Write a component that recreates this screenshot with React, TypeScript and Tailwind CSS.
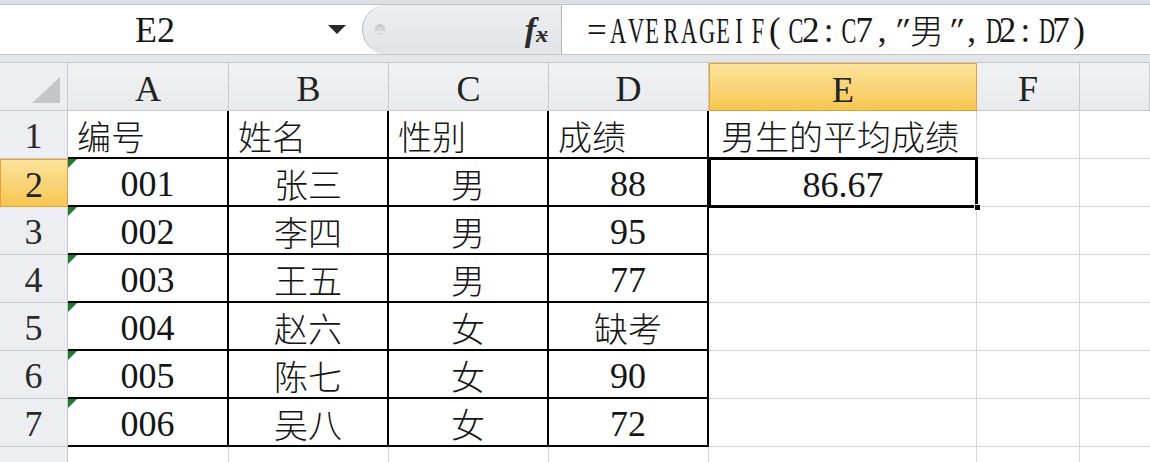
import React from "react";

const SERIF = "font-['Liberation_Serif','Noto_Sans_CJK_SC',serif]";
const CJK = "font-['Noto_Sans_CJK_SC',sans-serif] font-light";

const isCJK = (s: string) => /[\u4e00-\u9fff]/.test(s);

const formula = '=AVERAGEIF(C2:C7,"男",D2:D7)';

const data: string[][] = [
  ["编号", "姓名", "性别", "成绩"],
  ["001", "张三", "男", "88"],
  ["002", "李四", "男", "95"],
  ["003", "王五", "男", "77"],
  ["004", "赵六", "女", "缺考"],
  ["005", "陈七", "女", "90"],
  ["006", "吴八", "女", "72"],
];

function Txt({ s, left }: { s: string; left?: boolean }) {
  const font = isCJK(s) ? "text-[34px] leading-none " + CJK : "text-[36px] leading-none " + SERIF;
  return (
    <span className={font + " text-[#151515] " + (left ? "pl-[9px]" : "")}>{s}</span>
  );
}

function GreenTri() {
  return (
    <svg className="absolute left-0 top-0" width="9" height="9" viewBox="0 0 9 9">
      <polygon points="0,0 9,0 0,9" fill="#1f7a2e" />
    </svg>
  );
}

function FChar({ c }: { c: string }) {
  if (isCJK(c)) {
    return <span className={"inline-block w-[35.8px] text-center text-[34px] " + CJK}>{c}</span>;
  }
  const wide = /[A-Z]/.test(c);
  return (
    <span className={"inline-block w-[17.9px] text-center text-[35px] " + SERIF}>
      {wide ? (
        <span className="inline-block text-[36px] scale-x-[0.62]">{c}</span>
      ) : c === '"' ? (
        <span className="inline-block skew-x-[-20deg]">{c}</span>
      ) : (
        c
      )}
    </span>
  );
}

export default function App() {
  const colLetters = ["A", "B", "C", "D", "E", "F", ""];
  return (
    <div className="w-[1150px] h-[462px] overflow-hidden bg-white">
      {/* Formula bar */}
      <div className="h-[4px] bg-[#dcdfe3]" />
      <div className="flex h-[51px] border-y border-[#c2c5c9] bg-white">
        <div className="w-[362px] flex items-center">
          <div className={"w-[310px] text-center text-[36px] leading-none text-[#151515] " + SERIF}>E2</div>
          <div className="ml-[18px] w-0 h-0 border-x-[9px] border-t-[9px] border-x-transparent border-t-[#2a2a2a]" />
        </div>
        <div className="w-[200px] h-full rounded-l-[25px] border-l border-r border-[#b5b8bc] bg-gradient-to-b from-[#eceef1] to-[#e2e5e8] flex items-center justify-between pl-[10px] pr-[13px]">
          <svg width="14" height="14" viewBox="0 0 14 14" className="mb-[2px]">
            <path d="M2 9 C2 4 4.5 2 7 2 C9.5 2 12 4 12 9 Z" fill="#c9cbce" />
            <path d="M4 6 L10 6 M4 8 L10 8" stroke="#e6e7e9" strokeWidth="1" />
            <rect x="4" y="11" width="6" height="1.5" fill="#d6d8da" />
          </svg>
          <div className={"flex items-end text-[#2b2b2b] italic " + SERIF}>
            <span className="text-[34px] leading-none font-bold">f</span>
            <span className="text-[24px] leading-none font-bold mb-[1px] line-through decoration-1">x</span>
          </div>
        </div>
        <div className="flex-1 flex items-center pl-[25px] pt-[2px] text-[#151515]">
          <div className="flex leading-none">
            {formula.split("").map((c, i) => (
              <FChar key={i} c={c} />
            ))}
          </div>
        </div>
      </div>
      <div className="h-[8px] bg-[#e4e6e9] border-b border-[#c3c6ca]" />

      {/* Grid */}
      <div className="grid grid-cols-[68px_161px_160px_160px_160px_268px_103px_70px]">
        {/* header row */}
        <div className="h-[48px] border-r border-b border-[#c6c9cd] bg-[#eceef1] relative">
          <svg className="absolute left-[32px] top-[14px]" width="28" height="26" viewBox="0 0 28 26">
            <polygon points="28,0 28,26 0,26" fill="#c3c6ca" />
          </svg>
        </div>
        {colLetters.map((l, i) =>
          l === "E" ? (
            <div key={i} className="h-[48px] pt-[5px] border border-[#e3a13a] bg-gradient-to-b from-[#fbe39a] to-[#f7c64f] flex items-center justify-center">
              <span className={"text-[36px] leading-none text-[#222] " + SERIF}>{l}</span>
            </div>
          ) : (
            <div key={i} className="h-[48px] pt-[5px] border-r border-b border-[#c6c9cd] bg-gradient-to-b from-[#f1f2f4] to-[#e8eaed] flex items-center justify-center">
              <span className={"text-[36px] leading-none text-[#222] " + SERIF}>{l}</span>
            </div>
          )
        )}

        {/* body rows */}
        {[1, 2, 3, 4, 5, 6, 7, 8].map((r) => {
          const row = data[r - 1];
          return (
            <React.Fragment key={r}>
              {r === 2 ? (
                <div className="h-[48px] pt-[3px] border border-[#e3a13a] bg-gradient-to-b from-[#fbe39a] to-[#f7c64f] flex items-center justify-center">
                  <span className={"text-[36px] leading-none text-[#222] " + SERIF}>{r}</span>
                </div>
              ) : r === 8 ? (
                <div className="h-[48px] border-r border-b border-[#c6c9cd] bg-[#eceef1]" />
              ) : (
                <div className="h-[48px] pt-[3px] border-r border-b border-[#c6c9cd] bg-[#eceef1] flex items-center justify-center">
                  <span className={"text-[36px] leading-none text-[#2a2a2a] " + SERIF}>{r}</span>
                </div>
              )}
              {[0, 1, 2, 3].map((c) =>
                row ? (
                  <div
                    key={c}
                    className={
                      "relative h-[48px] pt-[3px] border-r-2 border-b-2 border-black bg-white flex items-center " +
                      (r === 1 ? "justify-start" : "justify-center")
                    }
                  >
                    {c === 0 && r > 1 ? <GreenTri /> : null}
                    <Txt s={row[c]} left={r === 1} />
                  </div>
                ) : (
                  <div key={c} className="h-[48px] border-r border-b border-[#d4d4d4] bg-white" />
                )
              )}
              {/* E column */}
              {r === 1 ? (
                <div className="h-[48px] pt-[3px] border-r border-b border-[#d4d4d4] bg-white flex items-center">
                  <span className={"text-[34px] leading-none text-[#151515] pl-[12px] " + CJK}>男生的平均成绩</span>
                </div>
              ) : r === 2 ? (
                <div className="relative h-[48px] pt-[3px] bg-white flex items-center justify-center">
                  <div className="absolute -left-[1px] -top-[2px] -right-[1px] -bottom-[1px] border-[3px] border-black" />
                  <div className="absolute -right-[4px] -bottom-[4px] w-[7px] h-[7px] bg-black border border-white" />
                  <span className={"text-[36px] leading-none text-[#151515] " + SERIF}>86.67</span>
                </div>
              ) : (
                <div className="h-[48px] border-r border-b border-[#d4d4d4] bg-white" />
              )}
              <div className="h-[48px] border-r border-b border-[#d4d4d4] bg-white" />
              <div className="h-[48px] border-b border-[#d4d4d4] bg-white" />
            </React.Fragment>
          );
        })}
      </div>
    </div>
  );
}
